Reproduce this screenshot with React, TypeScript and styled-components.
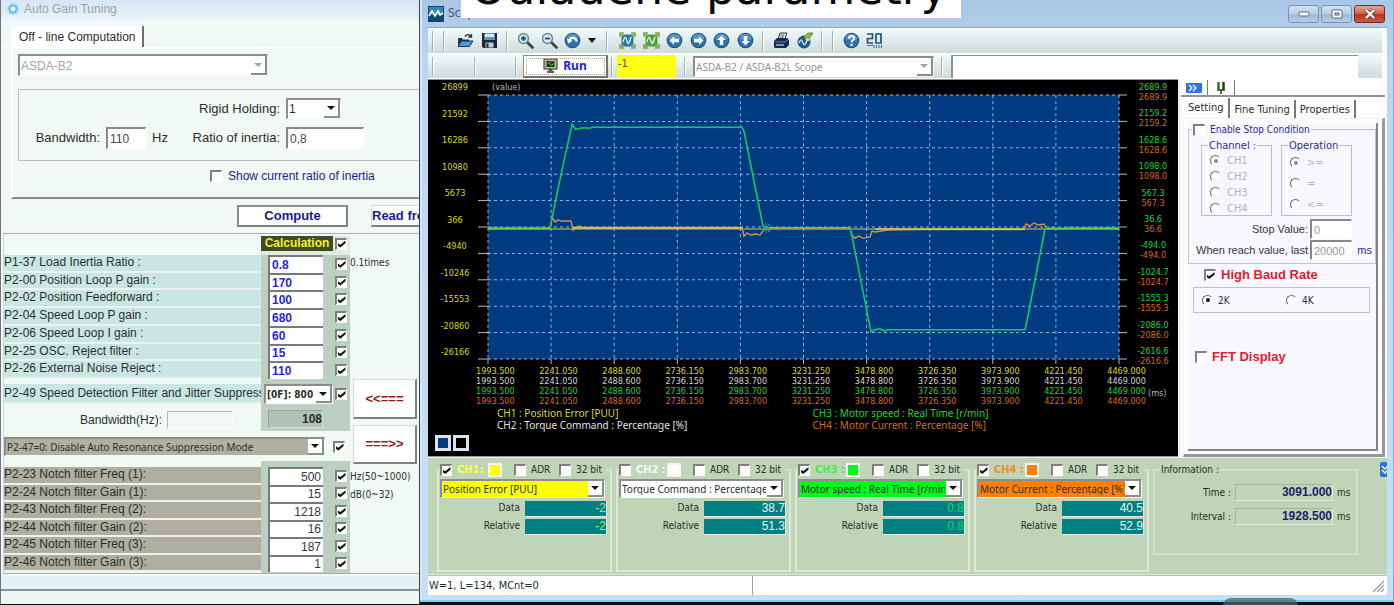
import React from 'react';
import styled, { createGlobalStyle, css } from 'styled-components';

const SANS = '"Liberation Sans", Arial, sans-serif';
const TAHOMA = '"DejaVu Sans Condensed", "DejaVu Sans", Verdana, sans-serif';
const NOTO = '"Noto Sans", "Open Sans", sans-serif';

const GlobalStyle = createGlobalStyle`
  *, *::before, *::after { box-sizing: border-box; }
  html, body { margin: 0; padding: 0; background: #0c0f12; }
  body { font: 12px/14px ${SANS}; color: #2a2f2c; }
  button, input, select { font: inherit; color: inherit; margin: 0; border-radius: 0; }
  fieldset { margin: 0; min-width: 0; }
`;

/* ---------- shared controls ---------- */

const CheckInput = styled.input.attrs({ type: 'checkbox' })`
  appearance: none;
  flex: none;
  display: grid;
  place-items: center;
  width: 12px;
  height: 12px;
  background: #fff;
  border: 1px solid #fff;
  border-top: 2px solid #7d807d;
  border-left: 2px solid #7d807d;
  &:checked::before {
    content: '';
    width: 8px;
    height: 7px;
    background: #111;
    clip-path: polygon(0 35%, 35% 62%, 100% 0, 100% 38%, 35% 100%, 0 70%);
  }
`;

const RadioInput = styled.input.attrs({ type: 'radio' })<{ $dim?: boolean }>`
  appearance: none;
  flex: none;
  display: grid;
  place-items: center;
  width: 11px;
  height: 11px;
  background: #fff;
  border: 1px solid #f4f4f6;
  border-top-color: #66666a;
  border-left-color: #66666a;
  border-radius: 50%;
  &:checked::before {
    content: '';
    width: 4px;
    height: 4px;
    border-radius: 50%;
    background: ${(p) => (p.$dim ? '#8a8a8e' : '#111')};
  }
`;

const SelectShell = styled.span<{ $width?: string; $height: number; $bg?: string; $color?: string; $font?: string }>`
  display: grid;
  align-items: stretch;
  width: ${(p) => p.$width ?? '100%'};
  height: ${(p) => p.$height}px;
  background: ${(p) => p.$bg ?? '#fff'};
  color: ${(p) => p.$color ?? '#2a2f2c'};
  font: ${(p) => p.$font ?? `12px/14px ${SANS}`};
  border: 1px solid #f6faf7;
  border-top: 2px solid #8b8f8c;
  border-left: 2px solid #8b8f8c;
  > * { grid-area: 1 / 1; min-width: 0; }
  select {
    appearance: none;
    width: 100%;
    padding: 0 17px 0 1px;
    background: none;
    border: 0;
    outline: 0;
    opacity: 1;
    text-overflow: clip;
  }
`;

const Arrow = styled.span<{ $dim?: boolean }>`
  justify-self: end;
  display: grid;
  place-items: center;
  width: 16px;
  background: #fff;
  border-right: 2px solid #8b8f8c;
  border-bottom: 2px solid #8b8f8c;
  pointer-events: none;
  &::after {
    content: '';
    border: 4px solid transparent;
    border-top-color: ${(p) => (p.$dim ? '#a2a5a3' : '#111')};
    border-bottom: 0;
  }
`;

type PickProps = {
  label: string;
  options: string[];
  height: number;
  width?: string;
  bg?: string;
  color?: string;
  font?: string;
  disabled?: boolean;
};

const Pick = ({ label, options, height, width, bg, color, font, disabled }: PickProps) => (
  <SelectShell $width={width} $height={height} $bg={bg} $color={color} $font={font}>
    <select aria-label={label} disabled={disabled}>
      {options.map((o) => (
        <option key={o}>{o}</option>
      ))}
    </select>
    <Arrow $dim={disabled} />
  </SelectShell>
);

const TextField = styled.input.attrs({ type: 'text' })<{ $width: number; $height: number; $dim?: boolean }>`
  width: ${(p) => p.$width}px;
  height: ${(p) => p.$height}px;
  padding: 0 2px;
  background: #fff;
  color: ${(p) => (p.$dim ? '#97979b' : '#4a4652')};
  border: 1px solid #fff;
  border-top: 2px solid #868a87;
  border-left: 2px solid #868a87;
  outline: 0;
`;

/* ---------- desktop ---------- */

const Desktop = styled.main`
  position: relative;
  display: flex;
  min-height: 100vh;
  padding-bottom: 2px;
  background: #0c0f12;
  overflow: hidden;
`;

const Caption = styled.div`
  position: absolute;
  top: 0;
  left: 461px;
  width: 500px;
  height: 18px;
  display: flex;
  align-items: flex-end;
  justify-content: center;
  padding-right: 4px;
  background: #fff;
  color: #0a0a0a;
  font: 46px/60px "DejaVu Sans", Verdana, sans-serif;
  white-space: nowrap;
  overflow: hidden;
`;

const DockTab = styled.div`
  position: absolute;
  right: 96px;
  bottom: 0;
  width: 75px;
  height: 8px;
  border-radius: 8px 8px 0 0;
  background: rgba(82, 98, 108, 0.75);
`;

/* ---------- auto gain tuning window ---------- */

const TuningWindow = styled.section`
  flex: none;
  display: flex;
  flex-direction: column;
  width: 420px;
  background: #f1f9f4;
  border-left: 1px solid #71767c;
  border-right: 1px solid #3b4650;
  overflow: hidden;
  white-space: nowrap;
`;

const TuningTitle = styled.header`
  display: flex;
  align-items: center;
  gap: 4px;
  height: 20px;
  padding: 0 5px 3px;
  background: linear-gradient(#d6e5f5, #eaf4f8);
  color: #9aa1a8;
`;

const TabStrip = styled.div`
  display: flex;
  align-items: flex-end;
  height: 28px;
  padding-left: 10px;
  border-bottom: 1px solid #fff;
`;

const OfflineTab = styled.button`
  height: 21px;
  padding: 0 6px 0 8px;
  background: #fff;
  border: 0;
  border-right: 2px solid #6d726f;
`;

const OfflinePanel = styled.div`
  margin-left: 10px;
  height: 151px;
  padding: 6px 0 0 5px;
  border-left: 2px solid #fff;
  border-bottom: 2px solid #858a87;
`;

const InertiaGroup = styled.div`
  display: grid;
  grid-template-columns: 87px 46px 40px 94px 1fr;
  grid-template-rows: 21px 22px;
  row-gap: 8px;
  align-items: center;
  justify-items: start;
  height: 72px;
  margin: 13px 0 0;
  padding: 8px 0 0;
  border: 1px solid #b9bfbb;
  border-right: 0;
  font-size: 13px;
  input, select { font-size: 12px; }
`;

const RightLabel = styled.label<{ $column?: string }>`
  justify-self: end;
  padding-right: 6px;
  grid-column: ${(p) => p.$column ?? 'auto'};
`;

const NavyCheck = styled.label`
  display: flex;
  align-items: center;
  gap: 6px;
  margin: 8px 0 0 192px;
  color: #1c1c86;
`;

const ActionRow = styled.div`
  display: flex;
  gap: 23px;
  padding: 6px 0 6px 236px;
`;

const WhiteButton = styled.button<{ $width: number; $height: number; $color?: string; $size?: number }>`
  flex: none;
  width: ${(p) => p.$width}px;
  height: ${(p) => p.$height}px;
  padding: 0;
  background: #fdfefe;
  color: ${(p) => p.$color ?? '#1b1b83'};
  border: 1px solid #d5dad7;
  border-right: 2px solid #7e827f;
  border-bottom: 2px solid #7e827f;
  font: bold ${(p) => p.$size ?? 13}px/14px ${SANS};
`;

const ComputeButton = styled(WhiteButton)`
  border-top: 2px solid #8d918e;
  border-left: 2px solid #8d918e;
`;

const ReadButton = styled(WhiteButton)`
  text-align: left;
`;

const ParamArea = styled.div`
  flex: 1 0 auto;
  display: grid;
  grid-template-columns: 346px 1fr;
  margin-left: 2px;
  border-top: 1px solid #a9afab;
  border-bottom: 1px solid #a9afab;
  border-left: 1px solid #cdd6d8;
  padding-top: 2px;
`;

const ParamColumn = styled.div`
  display: flex;
  flex-direction: column;
`;

const SideColumn = styled.div`
  display: flex;
  flex-direction: column;
  align-items: flex-start;
  padding-top: 18px;
`;

const Unit = styled.span`
  font: 10px/18px ${TAHOMA};
`;

const TransferButtons = styled.div`
  display: flex;
  flex-direction: column;
  gap: 6px;
  padding: 107px 0 4px 3px;
`;

const Rows = styled.div<{ $count: number; $height: number }>`
  display: grid;
  grid-template-rows: repeat(${(p) => p.$count}, minmax(0, 1fr));
  height: ${(p) => p.$height}px;
`;

const Row = styled.div`
  display: grid;
  grid-template-columns: 257px 89px;
  min-height: 0;
`;

const RowLabel = styled.label<{ $bg?: string }>`
  background: ${(p) => p.$bg ?? 'transparent'};
  border-bottom: 2px solid #e9f4f0;
  line-height: 15px;
  overflow: hidden;
`;

const ValueCell = styled.div`
  display: flex;
  align-items: center;
  gap: 12px;
  min-height: 0;
  padding-left: 7px;
  background: #bccfc1;
`;

const ValueInput = styled.input.attrs({ type: 'text' })<{ $right?: boolean }>`
  width: 55px;
  height: 100%;
  padding: 0 2px;
  background: #fff;
  border: 0;
  border-top: 2px solid #767b78;
  border-left: 2px solid #767b78;
  outline: 0;
  ${(p) =>
    p.$right
      ? css`
          color: #35353d;
          text-align: right;
          font: 12px/14px ${SANS};
        `
      : css`
          color: #2626d8;
          font: bold 12px/14px ${SANS};
        `}
`;

const HeaderCell = styled.div`
  display: flex;
  align-items: center;
  gap: 2px;
  padding-bottom: 4px;
  background: #dfebe3;
  strong {
    width: 72px;
    background: #3f4a26;
    color: #f4f41e;
    font: bold 12px/15px ${SANS};
    text-align: center;
  }
`;

const FilterCell = styled(ValueCell)`
  gap: 2px;
  padding-left: 3px;
`;

const FilterLabel = styled(RowLabel)`
  line-height: 18px;
`;

const BandCell = styled.div`
  display: flex;
  align-items: center;
  justify-content: flex-end;
  gap: 5px;
  height: 27px;
  padding: 4px 28px 0 0;
`;

const BandBox = styled.span`
  width: 66px;
  height: 18px;
  border: 1px solid #fff;
  border-top-color: #b4bab6;
  border-left-color: #b4bab6;
`;

const BandValue = styled.output`
  width: 55px;
  height: 18px;
  margin-top: 3px;
  background: #afc2b3;
  border: 1px solid #d3e0d6;
  border-top-color: #93a597;
  border-left-color: #93a597;
  color: #26302a;
  font: bold 12px/17px ${SANS};
  text-align: right;
`;

const Spacer = styled.div<{ $height: number }>`
  display: grid;
  grid-template-columns: 257px 89px;
  height: ${(p) => p.$height}px;
  &::after {
    content: '';
    grid-column: 2;
    background: #bccfc1;
  }
`;

const ResonanceRow = styled.div`
  display: flex;
  align-items: center;
  gap: 8px;
  margin: 6px 0 5px;
`;

const TuningFooter = styled.footer`
  height: 30px;
  background: linear-gradient(#f1f9f4 0 2px, #e4f1fa 2px 15px, #8b908e 15px 17px, #eef7f2 17px);
`;

const GAINS: [string, string][] = [
  ['P1-37 Load Inertia Ratio :', '0.8'],
  ['P2-00 Position Loop P gain :', '170'],
  ['P2-02 Position Feedforward :', '100'],
  ['P2-04 Speed Loop P gain :', '680'],
  ['P2-06 Speed Loop I gain :', '60'],
  ['P2-25 OSC. Reject filter :', '15'],
  ['P2-26 External Noise Reject :', '110'],
];

const NOTCHES: [string, string][] = [
  ['P2-23 Notch filter Freq (1):', '500'],
  ['P2-24 Notch filter Gain (1):', '15'],
  ['P2-43 Notch filter Freq (2):', '1218'],
  ['P2-44 Notch filter Gain (2):', '16'],
  ['P2-45 Notch filter Freq (3):', '187'],
  ['P2-46 Notch filter Gain (3):', '1'],
];

const GearIcon = () => (
  <svg width="14" height="14" viewBox="0 0 14 14" aria-hidden="true">
    <circle cx="7" cy="7" r="5.6" fill="none" stroke="#a5e6fb" strokeWidth="2" strokeDasharray="2.2 1.5" />
    <circle cx="7" cy="7" r="3.6" fill="#f3fbff" stroke="#6cbdf0" strokeWidth="2.4" />
  </svg>
);

const ParamRows = ({ items, bg, height, right }: { items: [string, string][]; bg: string; height: number; right?: boolean }) => (
  <Rows $count={items.length} $height={height}>
    {items.map(([name, value]) => {
      const id = name.slice(0, 5);
      return (
        <Row key={id}>
          <RowLabel htmlFor={id} $bg={bg}>{name}</RowLabel>
          <ValueCell>
            <ValueInput id={id} defaultValue={value} $right={right} />
            <CheckInput defaultChecked aria-label={`Use ${id}`} />
          </ValueCell>
        </Row>
      );
    })}
  </Rows>
);

const AutoGainTuning = () => (
  <TuningWindow>
    <TuningTitle><GearIcon />Auto Gain Tuning</TuningTitle>
    <TabStrip><OfflineTab type="button">Off - line Computation</OfflineTab></TabStrip>
    <OfflinePanel>
      <Pick label="Drive" options={['ASDA-B2']} height={22} width="250px" color="#a2a5a3" disabled />
      <InertiaGroup>
        <RightLabel htmlFor="rigid" $column="1 / 5">Rigid Holding:</RightLabel>
        <Pick label="Rigid Holding" options={['1']} height={21} width="55px" />
        <RightLabel htmlFor="bw">Bandwidth:</RightLabel>
        <TextField id="bw" $width={40} $height={22} defaultValue="110" />
        <span>Hz</span>
        <RightLabel htmlFor="ratio">Ratio of inertia:</RightLabel>
        <TextField id="ratio" $width={78} $height={22} defaultValue="0,8" />
      </InertiaGroup>
      <NavyCheck><CheckInput />Show current ratio of inertia</NavyCheck>
    </OfflinePanel>
    <ActionRow>
      <ComputeButton type="button" $width={111} $height={22}>Compute</ComputeButton>
      <ReadButton type="button" $width={120} $height={22}>Read from</ReadButton>
    </ActionRow>
    <ParamArea>
      <ParamColumn>
        <Row>
          <span />
          <HeaderCell>
            <strong>Calculation</strong>
            <CheckInput defaultChecked aria-label="Use all" />
          </HeaderCell>
        </Row>
        <ParamRows items={GAINS} bg="#c9e6e2" height={124} />
        <Spacer $height={5} />
        <Row>
          <FilterLabel $bg="#c9e6e2">P2-49 Speed Detection Filter and Jitter Suppress</FilterLabel>
          <FilterCell>
            <Pick label="P2-49" options={['[0F]: 800']} height={20} width="69px" font={`bold 10px/12px ${TAHOMA}`} />
            <CheckInput defaultChecked aria-label="Use P2-49" />
          </FilterCell>
        </Row>
        <Row>
          <BandCell>Bandwidth(Hz):<BandBox /></BandCell>
          <ValueCell><BandValue>108</BandValue></ValueCell>
        </Row>
        <ResonanceRow>
          <Pick
            label="P2-47"
            options={['P2-47=0: Disable Auto Resonance Suppression Mode']}
            height={19}
            width="321px"
            bg="#b0afa1"
            font={`10px/12px ${NOTO}`}
          />
          <CheckInput defaultChecked aria-label="Use P2-47" />
        </ResonanceRow>
        <Spacer $height={6} />
        <ParamRows items={NOTCHES} bg="#afaea0" height={105} right />
        <Spacer $height={1} />
      </ParamColumn>
      <SideColumn>
        <Unit>0.1times</Unit>
        <TransferButtons>
          <WhiteButton type="button" $width={64} $height={40} $color="#93181c">{'<<==='}</WhiteButton>
          <WhiteButton type="button" $width={64} $height={39} $color="#93181c">{'===>>'}</WhiteButton>
        </TransferButtons>
        <Unit>Hz(50~1000)</Unit>
        <Unit>dB(0~32)</Unit>
      </SideColumn>
    </ParamArea>
    <TuningFooter />
  </TuningWindow>
);

/* ---------- scope window ---------- */

const ScopeWindow = styled.section`
  flex: 1;
  min-width: 0;
  display: flex;
  flex-direction: column;
  padding: 0 7px 5px 8px;
  background: linear-gradient(#a9c6e6, #bcd5f3 60px, #c8def8);
  border-bottom: 2px solid #6fd3e6;
  box-shadow: inset 2px 0 0 #d7e6f6, inset -1px 0 0 #6bb4d8;
  margin-bottom: 2px;
  font: 11px/13px ${TAHOMA};
  color: #26302a;
  white-space: nowrap;
`;

const ScopeTitle = styled.header`
  display: flex;
  align-items: center;
  gap: 4px;
  height: 27px;
  padding-right: 2px;
  color: #44566e;
  font-size: 12px;
`;

const WindowButtons = styled.div`
  display: flex;
  gap: 2px;
  margin-left: auto;
`;

const WindowButton = styled.button<{ $close?: boolean }>`
  display: grid;
  place-items: center;
  width: 31px;
  height: 18px;
  padding: 0;
  border: 1px solid ${(p) => (p.$close ? '#6e2b2b' : '#7d93ad')};
  border-radius: 3px;
  background: ${(p) => (p.$close ? 'linear-gradient(#e3a597, #cf5f50 48%, #b8321f 52%, #cc5a3e)' : 'linear-gradient(#cfe0f2, #b9cfe8 48%, #9fbbdb 52%, #b5cde9)')};
`;

const Toolbars = styled.div`
  display: flex;
  flex-direction: column;
  gap: 2px;
  height: 52px;
  padding: 1px 2px 1px 0;
  background: #fbfdfd;
  border-top: 1px solid #9aa7b5;
`;

const Bar = styled.div`
  flex: 1;
  display: flex;
  align-items: center;
  margin-right: 3px;
  background: linear-gradient(#effcfb, #dbe7e6 60%, #cfdcdb);
`;

const Divider = styled.span<{ $before: number; $after: number }>`
  width: 2px;
  align-self: stretch;
  margin: 2px ${(p) => p.$after}px 2px ${(p) => p.$before}px;
  background: linear-gradient(90deg, #a7b1b1 50%, #fff 50%);
`;

const ToolButton = styled.button<{ $after: number }>`
  display: grid;
  place-items: center;
  width: 18px;
  height: 20px;
  margin-right: ${(p) => p.$after}px;
  padding: 0;
  border: 0;
  background: none;
`;

const RunButton = styled.button`
  display: flex;
  align-items: center;
  justify-content: center;
  gap: 5px;
  width: 85px;
  height: 23px;
  padding: 0;
  background: #fdfefe;
  color: #2222cf;
  border: 1px solid #8a8f8f;
  border-right: 2px solid #6f7474;
  border-bottom: 2px solid #6f7474;
  outline: 1px dotted #a9a66b;
  outline-offset: -4px;
  font: bold 12px/14px ${NOTO};
`;

const YellowField = styled.input.attrs({ type: 'text' })`
  width: 59px;
  height: 23px;
  padding: 0 1px 6px;
  border: 0;
  background: #fefe12;
  color: #55501a;
  outline: 0;
`;

const MessageField = styled.input.attrs({ type: 'text' })`
  flex: 1;
  min-width: 0;
  height: 23px;
  margin-right: 24px;
  border: 0;
  border-top: 1px solid #8d9292;
  border-left: 2px solid #8d9292;
  background: #fff;
`;

const Body = styled.div`
  flex: 1;
  display: grid;
  grid-template-columns: minmax(0, 1fr) 206px;
  gap: 3px;
  background: #eef0f2;
`;

/* chart */

const ChartPanel = styled.div`
  display: grid;
  grid-template-columns: 60px minmax(0, 1fr) 59px;
  grid-template-rows: 14px minmax(262px, 1fr) 7px 40px 25px 25px;
  padding-top: 1px;
  background: #000;
  border-top: 1px solid #8f9599;
  border-bottom: 1px solid #8f9599;
`;

const LeftAxis = styled.div`
  grid-area: 1 / 1 / 3 / 2;
  display: flex;
  flex-direction: column;
  justify-content: space-between;
  padding-right: 6px;
  color: #dada1c;
  text-align: center;
  font: 9px/13px ${TAHOMA};
`;

const RightAxis = styled.div`
  grid-area: 1 / 3 / 4 / 4;
  display: flex;
  flex-direction: column;
  justify-content: space-between;
  padding: 1px 0 0 9px;
  text-align: center;
  font: 9px/10px ${TAHOMA};
`;

const Tone = styled.div<{ $color: string }>`
  color: ${(p) => p.$color};
`;

const ValueMark = styled.span`
  grid-area: 1 / 2 / 2 / 3;
  padding-left: 4px;
  color: #b9b9b9;
  font: 9px/12px ${TAHOMA};
`;

const Plot = styled.svg`
  grid-area: 2 / 2 / 3 / 3;
  display: block;
  width: 100%;
  height: 100%;
  overflow: visible;
`;

const TimeAxis = styled.div`
  grid-area: 4 / 1 / 5 / 4;
  display: grid;
  grid-template-columns: 1fr 32px;
  padding-left: 48px;
  font: 9px/10px ${TAHOMA};
  > span { align-self: center; padding: 13px 0 0 2px; color: #b9b9b9; }
`;

const TimeLabels = styled.div`
  display: flex;
  justify-content: space-between;
`;

const Legend = styled.div`
  grid-area: 5 / 1 / 6 / 4;
  display: grid;
  grid-template-columns: 1fr 1fr;
  grid-auto-flow: column;
  grid-template-rows: 12px 12px;
  padding: 1px 50px 0 69px;
  font: 10px/12px ${NOTO};
`;

const Backdrops = styled.div`
  grid-area: 6 / 1 / 7 / 4;
  display: flex;
  align-items: center;
  gap: 2px;
  padding: 0 0 2px 7px;
`;

const Backdrop = styled.button<{ $color: string }>`
  width: 16px;
  height: 16px;
  padding: 0;
  border: 3px solid #dfe1ea;
  background: ${(p) => p.$color};
`;

const YELLOW = '#dada1c';
const GREEN = '#19d636';
const ORANGE = '#d96a12';

const LEFT_TICKS = ['26899', '21592', '16286', '10980', '5673', '366', '-4940', '-10246', '-15553', '-20860', '-26166'];
const RIGHT_TICKS = ['2689.9', '2159.2', '1628.6', '1098.0', '567.3', '36.6', '-494.0', '-1024.7', '-1555.3', '-2086.0', '-2616.6'];
const TIMES = ['1993.500', '2241.050', '2488.600', '2736.150', '2983.700', '3231.250', '3478.800', '3726.350', '3973.900', '4221.450', '4469.000'];
const STEPS = TIMES.map((_, i) => i);

const SPEED =
  '0,132.5 62,132.5 63,127 70,93 84,29 86,32 88,34 92,33 97,32.5 101,33 105,32 254,32 256,36 275,130 278,132.5 362,132.5 364,140 383,235 387,233 392,232 396,234 400,233 537,233 539,224 557,133 560,132.5 631,132.5';
const CURRENT =
  '0,132 61,132 63,130 64,121 67,126 70,124 73,125 83,125 85,134 88,131 91,130 95,131.5 254,131.5 256,140 259,137 263,139 268,138 272,139 275,135 278,132 362,132 364,139 367,142 371,140 375,142 382,141 384,135 387,136 400,134 430,133.5 536,133.5 538,128 542,130 546,127 550,129 556,128 559,133 563,132 575,133 577,132 631,132';

const Chart = () => (
  <ChartPanel>
    <LeftAxis>{LEFT_TICKS.map((t) => <span key={t}>{t}</span>)}</LeftAxis>
    <ValueMark>(value)</ValueMark>
    <Plot viewBox="0 0 631 262" preserveAspectRatio="none" role="img" aria-label="Scope traces">
      <rect width="631" height="262" fill="#003a80" />
      <g stroke="#8fb8d8" strokeWidth="1" strokeDasharray="3 3" fill="none">
        {STEPS.map((i) => <line key={`h${i}`} x1="0" x2="631" y1={i * 26.2} y2={i * 26.2} />)}
        {STEPS.map((i) => <line key={`v${i}`} y1="0" y2="262" x1={i * 63.1} x2={i * 63.1} />)}
      </g>
      <g stroke="#b6b9bc" strokeWidth="1">
        {STEPS.map((i) => <line key={`l${i}`} x1="-10" x2="0" y1={i * 26.2} y2={i * 26.2} />)}
        {STEPS.map((i) => <line key={`r${i}`} x1="631" x2="639" y1={i * 26.2} y2={i * 26.2} />)}
        {STEPS.map((i) => <line key={`b${i}`} y1="262" y2="267" x1={i * 63.1} x2={i * 63.1} />)}
      </g>
      <polyline points="0,133 631,133" stroke="#c9cf4a" strokeWidth="1" fill="none" />
      <polyline points={CURRENT} stroke="#d3934a" strokeWidth="1.4" fill="none" />
      <polyline points={SPEED} stroke="#14c862" strokeWidth="1.6" fill="none" />
      <path d="M85 132H254M387 133H537" stroke="#dfc56a" strokeWidth="1.6" />
      <path d="M282 132H362" stroke="#d3934a" strokeWidth="1.4" />
      <path d="M0 132.5H62M560 132.5H631" stroke="#5fd03c" strokeWidth="1.6" />
      <path d="M274 128l8 8M282 128l-8 8M278 127v10" stroke="#3aa58e" strokeWidth="1" />
    </Plot>
    <RightAxis>
      {RIGHT_TICKS.map((t) => (
        <div key={t}>
          <Tone $color={GREEN}>{t}</Tone>
          <Tone $color={ORANGE}>{t}</Tone>
        </div>
      ))}
    </RightAxis>
    <TimeAxis>
      <TimeLabels>
        {TIMES.map((t) => (
          <div key={t}>
            {[YELLOW, '#d4d4d4', GREEN, ORANGE].map((c) => <Tone key={c} $color={c}>{t}</Tone>)}
          </div>
        ))}
      </TimeLabels>
      <span>(ms)</span>
    </TimeAxis>
    <Legend>
      <Tone $color={YELLOW}>CH1 : Position Error [PUU]</Tone>
      <Tone $color="#e2e2e2">CH2 : Torque Command : Percentage [%]</Tone>
      <Tone $color={GREEN}>CH3 : Motor speed : Real Time [r/min]</Tone>
      <Tone $color={ORANGE}>CH4 : Motor Current : Percentage [%]</Tone>
    </Legend>
    <Backdrops>
      <Backdrop type="button" $color="#003a80" aria-label="Blue backdrop" />
      <Backdrop type="button" $color="#000" aria-label="Black backdrop" />
    </Backdrops>
  </ChartPanel>
);

/* settings side panel */

const Side = styled.aside`
  display: flex;
  flex-direction: column;
  padding: 1px 2px 0 0;
  background: #fdfdfe;
`;

const PinRow = styled.div`
  display: flex;
  align-items: flex-start;
  height: 17px;
  border-bottom: 2px solid #8f9296;
`;

const PinTab = styled.button`
  display: grid;
  place-items: center;
  width: 27px;
  height: 15px;
  padding: 0;
  border: 0;
  border-right: 1px solid #77797c;
  background: none;
`;

const SettingTabs = styled.div`
  display: flex;
  align-items: flex-end;
  height: 21px;
`;

const SettingTab = styled.button<{ $active?: boolean }>`
  height: ${(p) => (p.$active ? 20 : 18)}px;
  padding: ${(p) => (p.$active ? '0 5px 2px 7px' : '0 4px')};
  border: 0;
  border-right: 2px solid #75777a;
  background: none;
  font-size: 11px;
`;

const SettingBody = styled.div`
  flex: 1;
  display: flex;
  flex-direction: column;
  margin-left: 2px;
  padding: 4px 4px 3px 4px;
  border: 1px solid #f2f2f4;
  border-right: 3px solid #97979c;
  border-bottom: 3px solid #97979c;
`;

const SettingPage = styled.div`
  flex: 1;
  background: #f9f7fe;
  border-right: 2px solid #85858a;
  border-bottom: 2px solid #85858a;
`;

const StopGroup = styled.fieldset`
  padding: 0 3px 3px 7px;
  border: 1px solid #c3c2cb;
`;

const StopLegend = styled.legend<{ $left: number; $size?: number }>`
  display: flex;
  align-items: center;
  gap: 5px;
  margin-left: ${(p) => p.$left}px;
  padding: 0 1px;
  color: #2b2b9a;
  font-size: ${(p) => p.$size ?? 11}px;
  line-height: 13px;
`;

const OptionPair = styled.div`
  display: grid;
  grid-template-columns: 71px 71px;
  gap: 9px;
  padding: 3px 0 0 5px;
`;

const OptionGroup = styled.fieldset`
  display: flex;
  flex-direction: column;
  height: 77px;
  padding: 0 8px;
  border: 1px solid #bdbcc6;
`;

const OptionList = styled.div<{ $gap: number; $top: number }>`
  display: flex;
  flex-direction: column;
  gap: ${(p) => p.$gap}px;
  padding-top: ${(p) => p.$top}px;
  color: #b4b3bc;
`;

const Option = styled.label<{ $gap?: number }>`
  display: flex;
  align-items: center;
  gap: ${(p) => p.$gap ?? 6}px;
`;

const StopLine = styled.div<{ $top: number }>`
  display: grid;
  grid-template-columns: minmax(0, 1fr) 42px 18px;
  align-items: center;
  gap: 2px;
  margin-top: ${(p) => p.$top}px;
  text-align: right;
  color: #35353c;
  font: 11px/13px ${SANS};
  em { font-style: normal; color: #2b2b9a; }
`;

const RedCheck = styled.label<{ $margin: string }>`
  display: flex;
  align-items: center;
  gap: 5px;
  margin: ${(p) => p.$margin};
  color: #dd2030;
  font: bold 13px/14px ${SANS};
`;

const BaudGroup = styled.div`
  display: grid;
  grid-template-columns: 84px 1fr;
  align-items: center;
  height: 26px;
  margin: 5px 6px 0 5px;
  padding-left: 8px;
  border: 1px solid #c0bfc8;
  font-size: 10px;
`;

const SettingPanel = () => (
  <Side>
    <PinRow>
      <PinTab type="button" aria-label="Collapse">
        <svg width="16" height="10" viewBox="0 0 16 10">
          <rect width="16" height="10" rx="1" fill="#2d73e0" />
          <path d="M3 2l3 3-3 3M7 2l3 3-3 3" stroke="#fff" strokeWidth="1.3" fill="none" />
        </svg>
      </PinTab>
      <PinTab type="button" aria-label="Pin">
        <svg width="12" height="13" viewBox="0 0 12 13">
          <path d="M2 9h8M6 9v4" stroke="#2a4a1c" strokeWidth="1.6" />
          <path d="M3.5 1v8M8.5 1v8" stroke="#35682a" strokeWidth="2.4" />
          <path d="M8.5 1v8" stroke="#1d3814" strokeWidth="1.6" />
        </svg>
      </PinTab>
    </PinRow>
    <SettingTabs>
      <SettingTab type="button" $active>Setting</SettingTab>
      <SettingTab type="button">Fine Tuning</SettingTab>
      <SettingTab type="button">Properties</SettingTab>
    </SettingTabs>
    <SettingBody>
      <SettingPage>
        <StopGroup>
          <StopLegend $left={-4} $size={10}><CheckInput id="stop" /><label htmlFor="stop">Enable Stop Condition</label></StopLegend>
          <OptionPair>
            <OptionGroup disabled>
              <StopLegend $left={-2}>Channel :</StopLegend>
              <OptionList $gap={3} $top={2}>
                {['CH1', 'CH2', 'CH3', 'CH4'].map((c, i) => (
                  <Option key={c}><RadioInput name="channel" $dim defaultChecked={i === 0} />{c}</Option>
                ))}
              </OptionList>
            </OptionGroup>
            <OptionGroup disabled>
              <StopLegend $left={-2}>Operation</StopLegend>
              <OptionList $gap={8} $top={4}>
                {['>=', '=', '<='].map((c, i) => (
                  <Option key={c}><RadioInput name="operation" $dim defaultChecked={i === 0} />{c}</Option>
                ))}
              </OptionList>
            </OptionGroup>
          </OptionPair>
          <StopLine $top={3}>
            <label htmlFor="stopvalue">Stop Value:</label>
            <TextField id="stopvalue" $width={42} $height={20} $dim defaultValue="0" disabled />
          </StopLine>
          <StopLine $top={1}>
            <label htmlFor="last">When reach value, last</label>
            <TextField id="last" $width={42} $height={20} $dim defaultValue="20000" disabled />
            <em>ms</em>
          </StopLine>
        </StopGroup>
        <RedCheck $margin="4px 0 0 16px"><CheckInput defaultChecked />High Baud Rate</RedCheck>
        <BaudGroup>
          <Option $gap={5}><RadioInput name="baud" defaultChecked />2K</Option>
          <Option $gap={5}><RadioInput name="baud" />4K</Option>
        </BaudGroup>
        <RedCheck $margin="37px 0 0 7px"><CheckInput />FFT Display</RedCheck>
      </SettingPage>
    </SettingBody>
  </Side>
);

/* channel strip */

const Strip = styled.div`
  display: flex;
  gap: 4px;
  height: 118px;
  padding: 5px 0 2px 9px;
  background: #c0d4b7;
  border-top: 1px solid #eef3ec;
  border-bottom: 1px solid #dfe7dc;
`;

const ChannelGroup = styled.fieldset`
  flex: none;
  width: 175px;
  padding: 2px 3px 0 1px;
  border: 2px solid #dde8d8;
  border-top-color: #d3e0cd;
`;

const ChannelHead = styled.legend`
  display: flex;
  align-items: center;
  width: 166px;
  padding: 0;
  color: #26302a;
  line-height: 14px;
`;

const ChannelName = styled.label<{ $color: string }>`
  width: 31px;
  margin-left: 5px;
  color: ${(p) => p.$color};
  font: bold 11px/14px ${TAHOMA};
`;

const ColorSwatch = styled.button<{ $color: string }>`
  width: 14px;
  height: 14px;
  margin-right: 12px;
  padding: 0;
  border: 2px solid #f3f6ef;
  background: ${(p) => p.$color};
`;

const HeadOption = styled.label<{ $width: number }>`
  display: flex;
  align-items: center;
  gap: 5px;
  width: ${(p) => p.$width}px;
  font-size: 10px;
`;

const Readout = styled.div`
  display: grid;
  grid-template-columns: 1fr 82px;
  gap: 2px 5px;
  margin-top: 3px;
  justify-items: end;
  line-height: 14px;
  font-size: 10px;
`;

const ReadValue = styled.output<{ $color: string }>`
  width: 100%;
  height: 16px;
  background: #008080;
  color: ${(p) => p.$color};
  border-bottom: 1px solid #dfeee8;
  border-right: 1px solid #dfeee8;
  font: 12px/15px ${SANS};
  text-align: right;
`;

const InfoGroup = styled.fieldset`
  flex: none;
  width: 205px;
  height: 92px;
  padding: 8px 6px 0;
  border: 2px solid #d5e1cf;
`;

const InfoLegend = styled.legend`
  margin-left: -1px;
  padding: 0 1px;
  font-size: 10px;
`;

const InfoRow = styled.div`
  display: grid;
  grid-template-columns: 70px 98px 1fr;
  gap: 4px;
  align-items: center;
  margin-bottom: 7px;
  font-size: 10px;
  label { text-align: right; }
  output {
    height: 17px;
    border: 1px solid #e4eee0;
    border-top-color: #a4b49c;
    border-left-color: #a4b49c;
    color: #1a1f6c;
    font: bold 12px/15px ${SANS};
    text-align: right;
  }
`;

const CollapseButton = styled.button`
  width: 7px;
  height: 15px;
  margin: -1px 0 0 auto;
  padding: 0;
  border: 0;
  border-radius: 2px 0 0 2px;
  background: #2d73e0;
  svg { display: block; }
`;

type Channel = { name: string; on: boolean; ink: string; fill: string; source: string; data: string; rel: string; value: string };

const CHANNELS: Channel[] = [
  { name: 'CH1:', on: true, ink: '#ffff45', fill: '#ffff00', source: 'Position Error [PUU]', data: '-2', rel: '-2', value: '#b7e84a' },
  { name: 'CH2 :', on: false, ink: '#f7fbf4', fill: '#ffffff', source: 'Torque Command : Percentage [%]', data: '38.7', rel: '51.3', value: '#e6f5f2' },
  { name: 'CH3 :', on: true, ink: '#3cf04e', fill: '#00f81c', source: 'Motor speed : Real Time [r/min]', data: '0.8', rel: '0.8', value: '#12d858' },
  { name: 'CH4 :', on: true, ink: '#f58a28', fill: '#ff8000', source: 'Motor Current : Percentage [%]', data: '40.5', rel: '52.9', value: '#e6f5f2' },
];

const ChannelStrip = () => (
  <Strip>
    {CHANNELS.map((c) => {
      const id = c.name.slice(0, 3);
      return (
        <ChannelGroup key={id}>
          <ChannelHead>
            <CheckInput id={id} defaultChecked={c.on} />
            <ChannelName htmlFor={id} $color={c.ink}>{c.name}</ChannelName>
            <ColorSwatch type="button" $color={c.fill} aria-label={`${id} colour`} />
            <HeadOption $width={45}><CheckInput />ADR</HeadOption>
            <HeadOption $width={45}><CheckInput />32 bit</HeadOption>
          </ChannelHead>
          <Pick label={`${id} source`} options={[c.source]} height={19} width="165px" bg={c.fill} font={`10px/12px ${NOTO}`} />
          <Readout>
            <span>Data</span><ReadValue $color={c.value}>{c.data}</ReadValue>
            <span>Relative</span><ReadValue $color={c.value}>{c.rel}</ReadValue>
          </Readout>
        </ChannelGroup>
      );
    })}
    <InfoGroup>
      <InfoLegend>Information :</InfoLegend>
      <InfoRow><label htmlFor="time">Time :</label><output id="time">3091.000</output>ms</InfoRow>
      <InfoRow><label htmlFor="interval">Interval :</label><output id="interval">1928.500</output>ms</InfoRow>
    </InfoGroup>
    <CollapseButton type="button" aria-label="Collapse channels">
      <svg width="7" height="15" viewBox="0 0 7 15"><path d="M2 4l3 3 3-3M2 8l3 3 3-3" stroke="#fff" strokeWidth="1.4" fill="none" /></svg>
    </CollapseButton>
  </Strip>
);

const StatusBar = styled.footer`
  display: grid;
  grid-template-columns: 323px 1fr 16px;
  align-items: center;
  height: 20px;
  padding-left: 1px;
  background: #fdfefe;
  border-top: 1px solid #b9bdbf;
  > span + span { align-self: stretch; border-left: 1px solid #9fa3a5; }
`;

/* toolbar icons */

const ICON = { width: 17, height: 17, viewBox: '0 0 17 17', 'aria-hidden': true } as const;

const Disc = ({ children }: { children: React.ReactNode }) => (
  <svg {...ICON}>
    <circle cx="8.5" cy="8.5" r="7.8" fill="#1b4f80" />
    <circle cx="8.5" cy="8.5" r="6.8" fill="#2c73ae" />
    <path d="M2.2 7a6.4 6.4 0 0 1 12.6 0q-6.3 2.5-12.6 0z" fill="#76a8cf" opacity="0.6" />
    {children}
  </svg>
);

const ArrowDisc = ({ turn }: { turn: number }) => (
  <Disc>
    <path transform={`rotate(${turn} 8.5 8.5)`} d="M3.5 8.5l4.5-4.3v2.6h5v3.4h-5v2.6z" fill="#fff" />
  </Disc>
);

const Lens = ({ plus }: { plus?: boolean }) => (
  <svg {...ICON}>
    <path d="M9.5 9.5l6 6" stroke="#3d4044" strokeWidth="2.6" strokeLinecap="round" />
    <circle cx="6.5" cy="6.5" r="4.9" fill="#d8eaf7" stroke="#6f8598" strokeWidth="1.5" />
    <path d={plus ? 'M4 6.5h5M6.5 4v5' : 'M4 6.5h5'} stroke="#174f86" strokeWidth="1.8" />
  </svg>
);

const FitIcon = ({ fill, edge }: { fill: string; edge: string }) => (
  <svg {...ICON}>
    <rect x="2.5" y="2.5" width="12" height="12" fill={fill} />
    <path d="M4 10c2-7 3-5 4-1s2 3 4-4" stroke="#e9f7ee" strokeWidth="1.3" fill="none" />
    <path d="M1 5V1h4M12 1h4v4M16 12v4h-4M5 16H1v-4" stroke={edge} strokeWidth="1.6" fill="none" />
    <path d="M1.5 1.5l3 3M15.5 1.5l-3 3M1.5 15.5l3-3M15.5 15.5l-3-3" stroke={edge} strokeWidth="1.2" />
  </svg>
);

const OpenIcon = () => (
  <svg {...ICON}>
    <path d="M1 14V6h4l1 1.5h6V10H4z" fill="#12395c" />
    <path d="M1 14.5l3.5-5.5H16l-3.5 5.5z" fill="#4d9bd0" stroke="#12395c" />
    <path d="M8 4.5c2-2.5 4-2.5 6 0M14.5 2v3h-3" stroke="#1d2f3e" strokeWidth="1.3" fill="none" />
  </svg>
);

const SaveIcon = () => (
  <svg {...ICON}>
    <path d="M1 1h15v15H2.5L1 14.5z" fill="#1d2733" />
    <rect x="3.5" y="1.5" width="10" height="6.5" fill="#d7ecf7" />
    <rect x="3.5" y="5" width="10" height="3" fill="#4b9ccb" />
    <rect x="4.5" y="10.5" width="8" height="5" fill="#c7cfd6" />
    <rect x="5.5" y="11.5" width="2" height="4" fill="#1d2733" />
  </svg>
);

const PrintIcon = () => (
  <svg {...ICON}>
    <path d="M5 7l2-6h7l-2 6z" fill="#e8edf1" stroke="#2a2f38" />
    <path d="M7.5 3h4M7 5h4" stroke="#5a6068" />
    <path d="M1 9l3-3h10l2 2v5l-3 3H2l-1-1z" fill="#17284f" />
    <path d="M2 10h10l3-2.5" stroke="#5f86c8" fill="none" />
    <path d="M3 13h8" stroke="#9fb8e2" strokeWidth="1.5" />
  </svg>
);

const EraseIcon = () => (
  <svg {...ICON}>
    <circle cx="7" cy="10" r="6.5" fill="#1f5785" />
    <path d="M2 11c2-5 3-3 4 0s3 2 4-3" stroke="#d5e9f6" strokeWidth="1.3" fill="none" />
    <path d="M7 5l4-4h5l-4 5.5H8z" fill="#8fbb32" stroke="#4e6c1a" strokeWidth="0.8" />
    <path d="M8 6.5h4l1 2-3 .5z" fill="#e9efc9" />
  </svg>
);

const HelpIcon = () => (
  <Disc>
    <path d="M6 6.5c0-3.3 5.2-3.3 5.2-.3 0 2-2.6 2-2.6 4" stroke="#fff" strokeWidth="1.9" fill="none" />
    <circle cx="8.6" cy="12.7" r="1.2" fill="#fff" />
  </Disc>
);

const CounterIcon = () => (
  <svg {...ICON}>
    <path d="M1 2h5.5v4.5H1.5V11H7M10 2h5v9h-5z" stroke="#234f7d" strokeWidth="1.7" fill="none" />
    <path d="M1 13.500h6M8 13v3M10.500 13v3M13 13v3M15.500 13v3" stroke="#4b6f93" strokeWidth="1.1" />
  </svg>
);

const UndoIcon = () => (
  <Disc>
    <path d="M5.5 8.5c1-3.8 6.5-3.8 7.200 1.200" stroke="#fff" strokeWidth="2" fill="none" />
    <path d="M3 6.5l1 5 4.5-2.6z" fill="#fff" />
  </Disc>
);

const CaretIcon = () => (
  <svg width="8" height="5" viewBox="0 0 8 5" aria-hidden="true"><path d="M0 0h8L4 5z" fill="#111" /></svg>
);

const ScopeIcon = () => (
  <svg width="16" height="16" viewBox="0 0 16 16" aria-hidden="true">
    <rect width="16" height="16" fill="#12486f" />
    <rect x="1" y="1" width="14" height="8" fill="#2f86b4" />
    <path d="M1 10l3-5 3 5 3-5 2 4 3-2" stroke="#fff" strokeWidth="1.6" fill="none" />
  </svg>
);

const TOOLS: ({ label: string; icon: React.ReactNode; after: number } | number)[] = [
  { label: 'Open', icon: <OpenIcon />, after: 6 },
  { label: 'Save', icon: <SaveIcon />, after: 8 },
  8,
  { label: 'Zoom in', icon: <Lens plus />, after: 6 },
  { label: 'Zoom out', icon: <Lens />, after: 5 },
  { label: 'Undo zoom', icon: <UndoIcon />, after: 2 },
  { label: 'Zoom history', icon: <CaretIcon />, after: 5 },
  10,
  { label: 'Fit all', icon: <FitIcon fill="#2b78a8" edge="#8aa84a" />, after: 6 },
  { label: 'Fit vertical', icon: <FitIcon fill="#4da23a" edge="#8aa03a" />, after: 5 },
  { label: 'Left', icon: <ArrowDisc turn={0} />, after: 6 },
  { label: 'Right', icon: <ArrowDisc turn={180} />, after: 5 },
  { label: 'Up', icon: <ArrowDisc turn={90} />, after: 6 },
  { label: 'Down', icon: <ArrowDisc turn={270} />, after: 8 },
  8,
  { label: 'Print', icon: <PrintIcon />, after: 6 },
  { label: 'Clear', icon: <EraseIcon />, after: 7 },
  9,
  8,
  { label: 'Help', icon: <HelpIcon />, after: 5 },
  { label: 'Counter', icon: <CounterIcon />, after: 0 },
];

const Scope = () => (
  <ScopeWindow>
    <ScopeTitle>
      <ScopeIcon />
      Scope
      <WindowButtons>
        <WindowButton type="button" aria-label="Minimize">
          <svg width="12" height="6" viewBox="0 0 12 6"><rect x="1" y="1" width="10" height="4" rx="1" fill="#fff" stroke="#5b6675" /></svg>
        </WindowButton>
        <WindowButton type="button" aria-label="Maximize">
          <svg width="12" height="10" viewBox="0 0 12 10"><rect x="1" y="1" width="10" height="8" rx="1" fill="#fff" stroke="#5b6675" /><rect x="4" y="4" width="4" height="2" fill="#b8cde5" stroke="#5b6675" /></svg>
        </WindowButton>
        <WindowButton type="button" $close aria-label="Close">
          <svg width="12" height="10" viewBox="0 0 12 10"><path d="M2 1l8 8M10 1L2 9" stroke="#6b3a3a" strokeWidth="4" /><path d="M2 1l8 8M10 1L2 9" stroke="#fff" strokeWidth="2.4" /></svg>
        </WindowButton>
      </WindowButtons>
    </ScopeTitle>
    <Toolbars>
      <Bar>
        <Divider $before={4} $after={9} />
        <Divider $before={0} $after={11} />
        {TOOLS.map((t, i) =>
          typeof t === 'number' ? (
            <Divider key={i} $before={0} $after={t} />
          ) : (
            <ToolButton key={i} type="button" aria-label={t.label} title={t.label} $after={t.after}>{t.icon}</ToolButton>
          ),
        )}
      </Bar>
      <Bar>
        <Divider $before={4} $after={40} />
        <Divider $before={0} $after={39} />
        <Divider $before={0} $after={6} />
        <RunButton type="button">
          <svg width="15" height="15" viewBox="0 0 15 15" aria-hidden="true">
            <rect x="1" y="1" width="13" height="10" fill="#b9bcae" stroke="#2b2f27" />
            <rect x="3.5" y="3" width="8" height="6" fill="#123a12" />
            <path d="M4 6.5l2-2 2 3 3-2" stroke="#35e046" fill="none" />
            <path d="M7 4h3" stroke="#e23b2a" />
            <path d="M4 14h7M5.5 12h4" stroke="#2b2f27" strokeWidth="1.5" />
          </svg>
          Run
        </RunButton>
        <Divider $before={3} $after={4} />
        <YellowField defaultValue="-1" aria-label="Station" />
        <Divider $before={8} $after={7} />
        <Pick label="Scope source" options={['ASDA-B2 / ASDA-B2L Scope']} height={21} width="241px" color="#8f9395" font={`10px/12px ${NOTO}`} disabled />
        <Divider $before={7} $after={8} />
        <MessageField aria-label="Message" />
      </Bar>
    </Toolbars>
    <Body>
      <Chart />
      <SettingPanel />
    </Body>
    <ChannelStrip />
    <StatusBar>
      <span>W=1, L=134, MCnt=0</span>
      <span />
      <svg width="14" height="14" viewBox="0 0 14 14" aria-hidden="true"><path d="M2 13L13 2M6 13l7-7M10 13l3-3" stroke="#9a9da0" strokeWidth="1.3" /></svg>
    </StatusBar>
  </ScopeWindow>
);

const App = () => (
  <>
    <GlobalStyle />
    <Desktop>
      <AutoGainTuning />
      <Scope />
      <Caption>Ouladene parametry</Caption>
      <DockTab />
    </Desktop>
  </>
);

export default App;
